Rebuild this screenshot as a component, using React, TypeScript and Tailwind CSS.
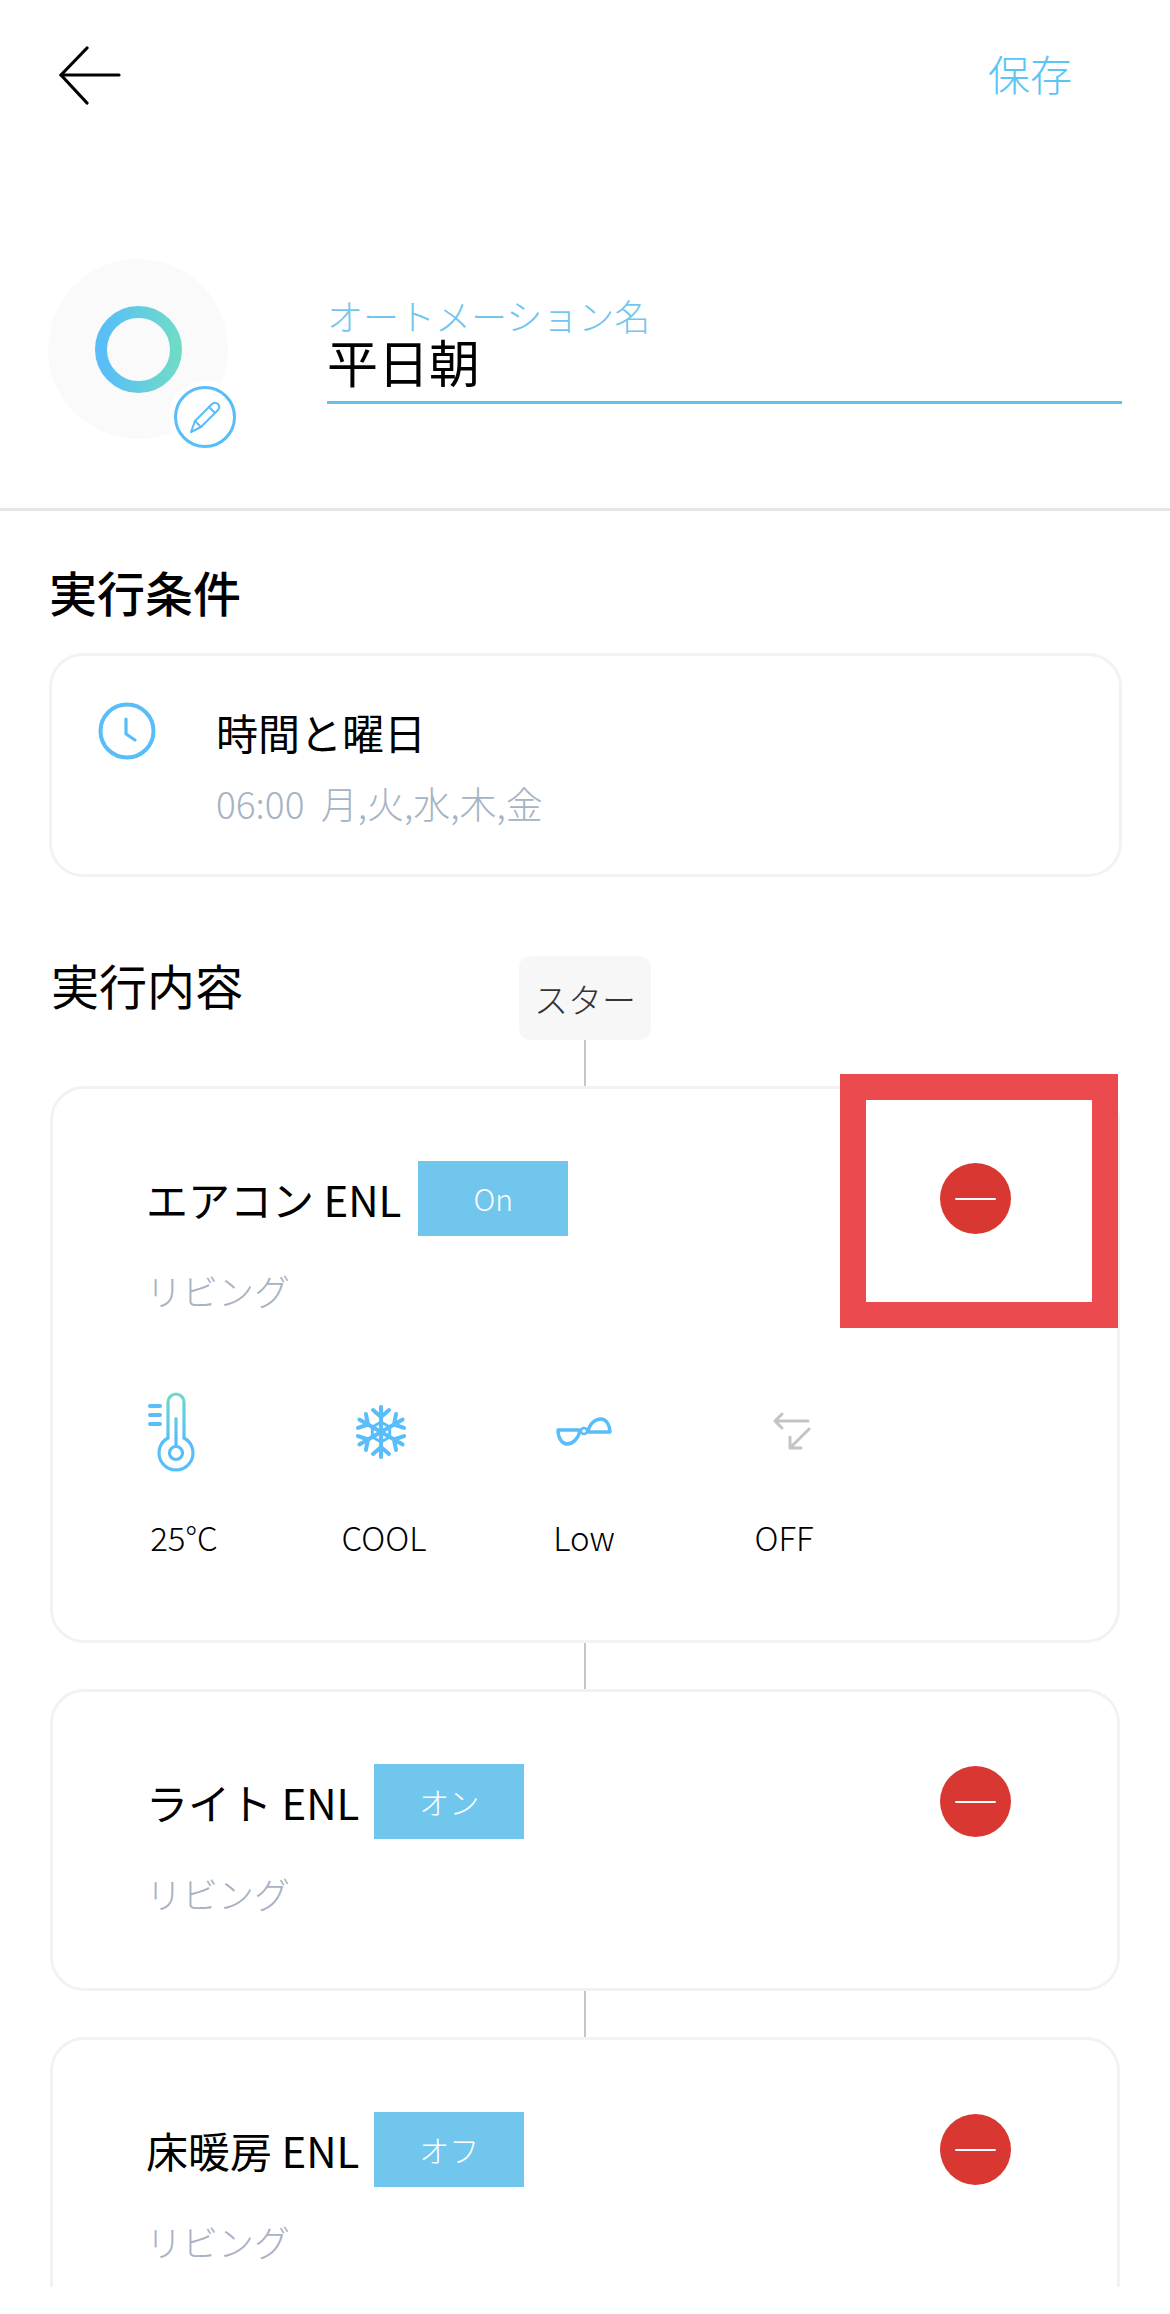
const jp = "font-['Noto_Sans_CJK_JP','Noto_Sans',sans-serif]";

function BackArrow() {
  return (
    <svg width="64" height="60" viewBox="0 0 64 60" fill="none" stroke="#000" strokeWidth="3.2" strokeLinecap="round" strokeLinejoin="round">
      <path d="M3 29 H61" />
      <path d="M29 2 L3 29 L29 57" />
    </svg>
  );
}

function Ring() {
  return (
    <svg width="87" height="87" viewBox="0 0 87 87" fill="none">
      <defs>
        <linearGradient id="ring" x1="0" y1="0" x2="1" y2="0">
          <stop offset="0" stopColor="#58bdf8" />
          <stop offset="1" stopColor="#6edbc9" />
        </linearGradient>
      </defs>
      <circle cx="43.5" cy="43.5" r="37.5" stroke="url(#ring)" strokeWidth="12" />
    </svg>
  );
}

function Pencil() {
  return (
    <svg width="34" height="34" viewBox="0 0 34 34" fill="none" stroke="#58bdf8" strokeWidth="2" strokeLinejoin="round" strokeLinecap="round">
      <path d="M3 32 L7 21 L24 4 Q27 1.5 30 4 Q32.5 7 30 10 L13 27 Z" />
      <path d="M7 21 L13 27" />
      <path d="M21 7 L27 13" />
    </svg>
  );
}

function Clock() {
  return (
    <svg width="58" height="58" viewBox="0 0 58 58" fill="none" stroke="#58bdf8" strokeLinecap="round" strokeLinejoin="round">
      <circle cx="29" cy="29" r="26.5" strokeWidth="4" />
      <path d="M28 17 V32 L37 38" strokeWidth="3.2" />
    </svg>
  );
}

function Thermo() {
  return (
    <svg width="52" height="84" viewBox="0 0 52 84" fill="none" strokeLinecap="round" strokeWidth="3.2">
      <defs>
        <linearGradient id="th" gradientUnits="userSpaceOnUse" x1="0" y1="2" x2="0" y2="50">
          <stop offset="0" stopColor="#6edbc9" />
          <stop offset="1" stopColor="#58bdf8" />
        </linearGradient>
      </defs>
      <path d="M22 48 V12 a8 8 0 0 1 16 0 V48 A17 17 0 1 1 22 48 Z" stroke="url(#th)" />
      <path d="M30 28.5 V55" stroke="url(#th)" />
      <circle cx="30" cy="63" r="6.5" stroke="#58bdf8" />
      <path d="M4 16 H14 M4 25 H14 M4 34 H14" stroke="#58bdf8" strokeWidth="4" />
    </svg>
  );
}

function Snow() {
  const arm = (
    <path d="M28 28 V3 M20 6 L28 13 L36 6 M28 28 L28 20" />
  );
  return (
    <svg width="56" height="56" viewBox="0 0 56 56" fill="none" stroke="#58bdf8" strokeWidth="4" strokeLinecap="round" strokeLinejoin="round">
      {[0, 60, 120, 180, 240, 300].map((a) => (
        <g key={a} transform={`rotate(${a} 28 28)`}>{arm}</g>
      ))}
      <path d="M28 18 L36.7 23 V33 L28 38 L19.3 33 V23 Z" strokeWidth="3" />
    </svg>
  );
}

function Fan() {
  return (
    <svg width="56" height="30" viewBox="0 0 56 30" fill="none" stroke="#58bdf8" strokeWidth="3.4" strokeLinejoin="round">
      <path d="M2 13 H24 C23 21 17 27 11 27 C6 27 2 21 2 13 Z" />
      <path d="M54 15 H32 C33 7 39 2 45 2 C50 2 54 8 54 15 Z" />
      <circle cx="28" cy="14" r="3" strokeWidth="2.4" />
    </svg>
  );
}

function Swing() {
  return (
    <svg width="42" height="40" viewBox="0 0 42 40" fill="none" stroke="#c4c4c4" strokeWidth="3" strokeLinecap="round" strokeLinejoin="round">
      <path d="M36 9 H3 M10 2 L3 9 L10 16" />
      <path d="M37 17 L18 36 M18 25 V36 H29" />
    </svg>
  );
}

function Minus() {
  return (
    <div className="flex size-[71px] shrink-0 items-center justify-center rounded-full bg-[#d93832]">
      <div className="h-[2px] w-[41px] rounded-full bg-white" />
    </div>
  );
}

function Pill({ children, className }: { children: string; className: string }) {
  return (
    <div className={`flex h-[75px] w-[150px] items-center justify-center bg-[#71c6ed] text-[30px] font-light text-white ${className}`}>
      {children}
    </div>
  );
}

function Connector({ h }: { h: string }) {
  return (
    <div className="flex justify-center">
      <div className={`w-[2px] bg-[#c6c6c6] ${h}`} />
    </div>
  );
}

function Head({ name, state, gap }: { name: string; state: string; gap: string }) {
  return (
    <div className="flex items-start justify-between pl-[93px] pr-[106px] pt-[72px]">
      <div>
        <div className="flex items-center">
          <span className="text-[42px] leading-[75px] text-black">{name}</span>
          <Pill className={gap}>{state}</Pill>
        </div>
        <div className="mt-[29px] text-[36px] font-light leading-[50px] text-[#a9b2c4]">リビング</div>
      </div>
      <div className="mt-[2px]">
        <Minus />
      </div>
    </div>
  );
}

function Setting({ icon, label, pad }: { icon: React.ReactNode; label: string; pad: string }) {
  return (
    <div className="flex w-[200px] flex-col items-center">
      <div className={`flex h-[84px] w-full items-center justify-center ${pad}`}>{icon}</div>
      <div className="mt-[40px] text-[33px] font-light leading-[46px] text-black">{label}</div>
    </div>
  );
}

export default function App() {
  return (
    <div className={`h-[2314px] w-[1170px] overflow-hidden bg-white ${jp}`}>
      <header className="flex items-start justify-between pl-[58px] pr-[98px] pt-[46px]">
        <BackArrow />
        <span className="text-[42px] font-light leading-[54px] text-[#58c5f5]">保存</span>
      </header>

      <section className="flex h-[405px] items-start border-b-[3px] border-[#e6e7ea] pl-[48px] pr-[48px] pt-[153px]">
        <div className="relative flex size-[180px] shrink-0 items-center justify-center rounded-full bg-[#fafafa]">
          <Ring />
          <div className="absolute left-[121px] top-[122px] flex size-[72px] items-center justify-center rounded-full bg-white">
            <div className="flex size-[62px] items-center justify-center rounded-full border-[3px] border-[#58bdf8]">
              <Pencil />
            </div>
          </div>
        </div>
        <div className="ml-[99px] flex-1 border-b-[3px] border-[#63bfeb] pb-[12px] pt-[38px]">
          <div className="text-[36px] font-light leading-[36px] text-[#71c6ed]">オートメーション名</div>
          <div className="text-[51px] leading-[56px] text-black">平日朝</div>
        </div>
      </section>

      <section className="pl-[49px] pr-[48px]">
        <h2 className="mt-[47px] text-[48px] font-medium leading-[66px] text-black">実行条件</h2>
        <div className="mt-[29px] flex h-[224px] rounded-[34px] border-[3px] border-[#f2f2f3] pl-[46px] pt-[46px]">
          <Clock />
          <div className="ml-[60px] -mt-px">
            <div className="text-[42px] leading-[62px] text-black">時間と曜日</div>
            <div className="mt-[15px] text-[37px] font-light leading-[50px] text-[#a6b3c4]">06:00&nbsp; 月,火,水,木,金</div>
          </div>
        </div>
      </section>

      <section className="relative mt-[71px] h-[1339px] overflow-hidden px-[50px] pt-[8px]">
        <h2 className="absolute left-[51px] top-0 text-[48px] leading-[72px] text-black">実行内容</h2>
        <div className="flex justify-center">
          <div className="flex h-[84px] w-[132px] items-center justify-center rounded-[12px] bg-[#f7f7f7] text-[34px] font-light text-[#333]">スター</div>
        </div>
        <Connector h="h-[46px]" />

        <div className="relative h-[557px] rounded-[34px] border-[3px] border-[#f2f2f3]">
          <Head name="エアコン ENL" state="On" gap="ml-[17px]" />
          <div className="mt-[75px] flex pl-[31px]">
            <Setting icon={<Thermo />} label="25°C" pad="pr-[25px]" />
            <Setting icon={<Snow />} label="COOL" pad="pr-[6px]" />
            <Setting icon={<Fan />} label="Low" pad="" />
            <Setting icon={<Swing />} label="OFF" pad="pl-[18px]" />
          </div>
          <div className="absolute left-[787px] top-[-15px] h-[254px] w-[278px] border-[26px] border-[#eb4a4f]" />
        </div>

        <Connector h="h-[46px]" />
        <div className="h-[302px] rounded-[34px] border-[3px] border-[#f2f2f3]">
          <Head name="ライト ENL" state="オン" gap="ml-[15px]" />
        </div>
        <Connector h="h-[46px]" />
        <div className="h-[302px] rounded-[34px] border-[3px] border-[#f2f2f3]">
          <Head name="床暖房 ENL" state="オフ" gap="ml-[15px]" />
        </div>
      </section>
    </div>
  );
}
